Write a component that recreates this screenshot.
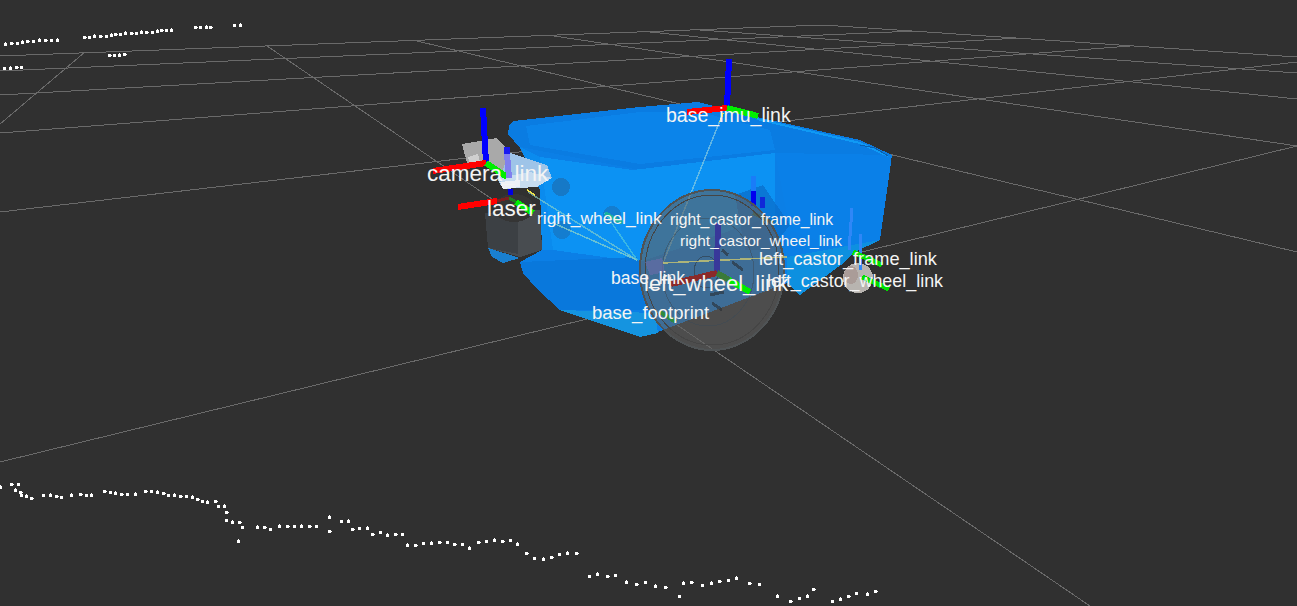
import React from 'react';

// scan points, written as [x, y] in screen pixels
const topScan = [
  [5,44],[11,43],[17,43],[22,42],[27,41],[33,41],[39,40],[45,40],[51,40],[57,40],[84,37],[89,37],[94,36],[100,36],[106,36],[111,35],[115,34],[120,34],[125,33],[131,33],[136,33],[141,32],[146,32],[152,32],[157,31],[161,30],[166,30],[171,30],[195,27],[200,27],[206,27],[210,27],[234,25],[240,25],
  [109,55],[114,55],[119,55],[124,54],[4,68],[10,68],[16,67],[21,67],
];

const bottomScan = [
  [0,487],[11,484],[18,484],[15,490],[20,492],[21,495],[26,496],[31,498],[43,495],[50,495],[56,496],[61,497],[71,495],[80,494],[86,495],[91,495],[104,491],[110,492],[115,493],[121,494],[127,494],[135,494],[145,491],[151,491],[157,492],[163,493],[168,495],[174,495],[180,496],[186,496],[192,497],[197,499],[202,501],[207,502],[215,501],[218,506],[224,506],[226,512],[226,520],[232,522],[239,522],[242,527],[257,527],[264,527],[270,529],[279,526],[287,526],[294,526],[301,526],[309,526],[316,526],[329,517],[329,531],[341,521],[348,521],[352,529],[359,528],[367,528],[372,534],[380,532],[387,535],[395,534],[402,534],[407,545],[415,545],[423,543],[431,543],[439,542],[447,542],[238,541],
  [454,544],[462,544],[469,548],[478,542],[486,541],[494,540],[502,541],[510,540],[517,544],[526,553],[534,558],[543,559],[551,557],[559,554],[567,553],[576,553],[589,576],[597,574],[607,576],[615,575],[626,582],[636,584],[645,582],[655,586],[665,587],[679,596],[683,583],[691,582],[702,585],[711,583],[719,581],[728,580],[736,578],[749,583],[759,584],[777,596],[790,601],[799,598],[807,596],[813,589],[832,601],[840,599],[848,596],[856,593],[867,594],[875,591],
  [603,280],[613,291],[630,296],[633,297],
];

const gridLines = [
  // rising set
  [0,462,1297,146],[0,212,1297,62],[0,133,1130,46],[0,95,1020,38],[0,71,915,31],[0,56,823,25],
  // falling set
  [0,124,85,52],[267,46,1090,606],[417,41,1297,252],[547,35,1297,146],[650,32,1297,99],[700,30,1297,73],[823,25,1297,57],
];

const labels = [
  ['base_imu_link', 'left-[666px] top-[106px] text-[19.5px]'],
  ['camera_link', 'left-[427px] top-[163px] text-[22.5px]'],
  ['laser', 'left-[487px] top-[198px] text-[22.5px]'],
  ['right_wheel_link', 'left-[537px] top-[210px] text-[17.4px]'],
  ['right_castor_frame_link', 'left-[670px] top-[212px] text-[15.7px]'],
  ['right_castor_wheel_link', 'left-[680px] top-[233px] text-[15.5px]'],
  ['left_castor_frame_link', 'left-[759px] top-[250px] text-[18.2px]'],
  ['left_castor_wheel_link', 'left-[767px] top-[273px] text-[17.9px]'],
  ['base_link', 'left-[611px] top-[270px] text-[17.5px]'],
  ['left_wheel_link', 'left-[644px] top-[273px] text-[22px]'],
  ['base_footprint', 'left-[592px] top-[304px] text-[18.5px]'],
];

function Axis({ x1, y1, x2, y2, color, w = 6 }) {
  return <line x1={x1} y1={y1} x2={x2} y2={y2} stroke={color} strokeWidth={w} />;
}

function Dots({ points }) {
  return points.map(([x, y], i) => (
    <g key={i} fill="#ffffff">
      <rect x={x - 1} y={y - 1} width="3" height="3" />
      {i % 3 === 0 && <rect x={x} y={y - 2} width="1" height="1" />}
      {i % 3 === 1 && <rect x={x + 2} y={y} width="1" height="1" />}
    </g>
  ));
}

function Robot() {
  return (
    <g>
      {/* body */}
      <polygon fill="#0b7fe6" points="513,121 640,107 698,102 757,117 860,140 892,155 880,240 853,253 845,262 800,295 787,283 655,333 640,337 560,310 538,290 523,273 520,262 542,250 540,190 520,148 508,134 509,126" />
      <polygon fill="#0a7ce2" points="513,121 640,107 698,102 757,117 860,140 892,155 775,153 640,170 520,147 508,134 509,126" />
      <polygon fill="#0b84ea" points="526,126 640,112 700,112 770,130 775,150 640,164 530,145" />
      <polygon fill="#0c92f3" points="540,157 633,170 775,153 775,215 640,262 553,250" />
      <polygon fill="#0a8bee" points="520,147 540,157 553,250 542,250 540,190" />
      <polygon fill="#0a80e8" points="775,153 892,155 880,240 853,253 790,230" />
      <polygon fill="#0978dc" points="520,262 637,257 655,310 560,310 538,290 523,273" />
      <polygon fill="#1594e0" points="560,310 655,313 658,333 640,337" />
      <polygon fill="#0d90e0" points="787,257 880,240 853,253 845,262 800,295 787,283" />
      <polygon fill="#0a6cc8" opacity="0.7" points="735,195 763,185 790,225 770,250 745,250" />
      <polyline fill="none" stroke="#0f9af5" strokeWidth="2" points="757,119 860,143 888,156" />
      <polyline fill="none" stroke="#0a5fb0" strokeWidth="1" points="860,145 875,148 888,156" />
      <circle cx="561" cy="187" r="9" fill="#1a70b8" opacity="0.75" />
      <circle cx="612" cy="215" r="9" fill="#1a70b8" opacity="0.6" />
      <circle cx="562" cy="230" r="9" fill="#1a70b8" opacity="0.6" />

      {/* laser */}
      <polygon fill="#1a80d0" points="488,248 520,258 503,263 492,257" />
      <polygon fill="#484c50" points="485,213 540,210 542,250 520,257 488,248" />
      <polygon fill="#3c4044" points="485,213 518,211 518,254 488,248" />
      <ellipse cx="514" cy="208" rx="20" ry="14" fill="#353535" />

      {/* camera */}
      <polygon fill="#a9a9a9" points="462,144 497,138 517,160 507,173 483,163 467,163" />
      <polygon fill="#cfcfcf" points="468,157 478,154 481,165 470,163" />
      <polygon fill="#9ec4e8" points="498,180 510,153 547,165 552,178 537,187 503,189" />
      <polygon fill="#c6dcf0" points="500,178 530,172 552,178 537,187 503,189" />
      <polygon fill="#eef2f6" points="500,182 520,180 520,187 503,189" />

      {/* tf links */}
      <g fill="none" strokeWidth="1.5">
        <line x1="553" y1="223" x2="637" y2="260" stroke="#8fd6c8" opacity="0.7" />
        <line x1="528" y1="192" x2="637" y2="260" stroke="#8fd6c8" opacity="0.6" />
        <line x1="605" y1="213" x2="637" y2="260" stroke="#46c0e0" opacity="0.8" />
        <line x1="527" y1="190" x2="535" y2="195" stroke="#f5e84a" />
        <line x1="723" y1="113" x2="663" y2="263" stroke="#9ad6e0" opacity="0.6" />
        <line x1="723" y1="113" x2="720" y2="122" stroke="#f5e84a" />
      </g>

      {/* axes behind the wheel */}
      <Axis x1="753" y1="176" x2="753" y2="191" color="#1a7cf8" w="5" />
      <Axis x1="753" y1="191" x2="753" y2="206" color="#0000f0" w="5" />
      <Axis x1="762" y1="197" x2="762" y2="208" color="#1028d8" w="5" />
      <Axis x1="753" y1="213" x2="773" y2="223" color="#2a6a5a" w="4" />

      {/* wheel */}
      <ellipse cx="712" cy="270" rx="72" ry="80" fill="#606060" fillOpacity="0.6" stroke="#4f5355" strokeWidth="2" />
      <ellipse cx="712" cy="270" rx="67" ry="75" fill="none" stroke="#454545" />
      <ellipse cx="708" cy="272" rx="46" ry="54" fill="none" stroke="#3c4a56" opacity="0.5" />
      <ellipse cx="706" cy="272" rx="12" ry="16" fill="none" stroke="#2f3a44" opacity="0.6" />
      <polygon fill="#6c6ca8" opacity="0.6" points="645,262 662,258 665,272 650,275" />
      <g stroke="#2a2f34" strokeWidth="3" opacity="0.6">
        <line x1="722" y1="250" x2="728" y2="255" />
        <line x1="732" y1="262" x2="743" y2="270" />
        <line x1="710" y1="295" x2="724" y2="292" />
        <line x1="712" y1="303" x2="722" y2="310" />
      </g>
      <line x1="663" y1="263" x2="787" y2="257" stroke="#d2cc70" strokeWidth="1.5" opacity="0.75" />

      {/* castor */}
      <ellipse cx="858" cy="278" rx="15" ry="15" fill="#b8b4b0" />
      <ellipse cx="851" cy="275" rx="7" ry="9" fill="#a08c88" opacity="0.6" />

      {/* frames */}
      <Axis x1="483" y1="108" x2="486" y2="163" color="#0000ff" w="6" />
      <Axis x1="433" y1="171" x2="486" y2="163" color="#ff0000" />
      <Axis x1="486" y1="163" x2="507" y2="177" color="#00ee00" />
      <Axis x1="507" y1="147" x2="507" y2="154" color="#1a1af0" />
      <Axis x1="507" y1="154" x2="509" y2="178" color="#8080ee" />
      <Axis x1="510" y1="189" x2="510" y2="195" color="#0000e0" w="5" />
      <Axis x1="458" y1="207" x2="497" y2="201" color="#ff0000" />
      <Axis x1="497" y1="201" x2="509" y2="198" color="#7a2020" w="3" />
      <Axis x1="509" y1="198" x2="516" y2="202" color="#207a20" w="3" />
      <Axis x1="516" y1="202" x2="533" y2="213" color="#00ee00" />
      <Axis x1="729" y1="59" x2="727" y2="108" color="#0000ff" />
      <Axis x1="687" y1="112" x2="727" y2="108" color="#ff0000" />
      <Axis x1="727" y1="108" x2="758" y2="116" color="#00ee00" />
      <Axis x1="605" y1="213" x2="622" y2="223" color="#17b0a0" w="4" />
      <Axis x1="718" y1="223" x2="717" y2="273" color="#38389a" />
      <Axis x1="671" y1="284" x2="717" y2="273" color="#8a2a2a" />
      <Axis x1="717" y1="273" x2="729" y2="280" color="#3a7a3a" />
      <Axis x1="729" y1="280" x2="750" y2="292" color="#00ee00" />
      <Axis x1="660" y1="312" x2="676" y2="322" color="#2f8a3f" w="4" />
      <Axis x1="852" y1="208" x2="849" y2="250" color="#2f87f7" w="3" />
      <Axis x1="860" y1="234" x2="860" y2="270" color="#2f87f7" w="3" />
      <Axis x1="853" y1="252" x2="882" y2="265" color="#00e000" w="5" />
      <Axis x1="862" y1="277" x2="889" y2="289" color="#00e000" w="5" />
    </g>
  );
}

export default function App() {
  return (
    <div className="relative h-[606px] w-[1297px] overflow-hidden bg-[#303030] font-['Liberation_Sans',Arial,sans-serif]">
      <svg className="block" width="1297" height="606" viewBox="0 0 1297 606" shapeRendering="crispEdges">
        <g stroke="#6a6a6a" strokeWidth="1" fill="none">
          {gridLines.map(([x1, y1, x2, y2], i) => (
            <line key={i} x1={x1} y1={y1} x2={x2} y2={y2} />
          ))}
        </g>
        <Dots points={topScan} />
        <Dots points={bottomScan} />
        <Robot />
      </svg>
      {labels.map(([text, pos]) => (
        <span key={text} className={`absolute whitespace-nowrap leading-none text-[#f4f4f4] ${pos}`}>
          {text}
        </span>
      ))}
    </div>
  );
}
